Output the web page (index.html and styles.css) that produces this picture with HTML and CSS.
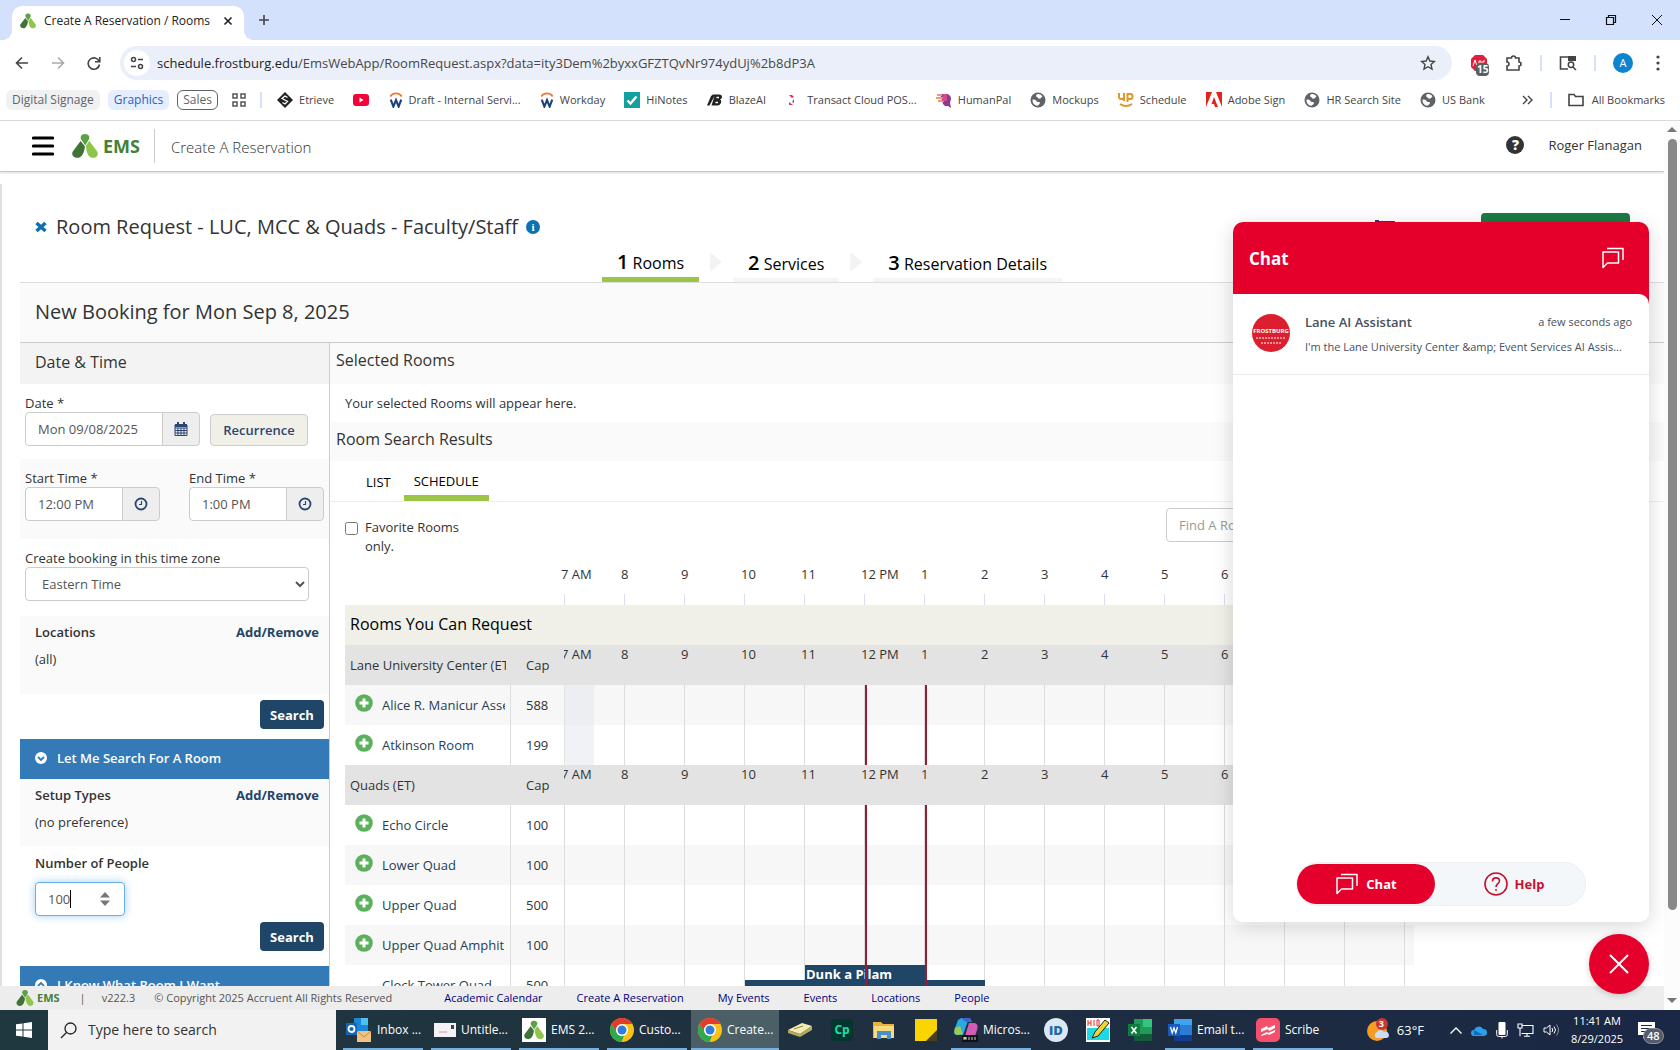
FILE: index.html
```
<!DOCTYPE html>
<html lang="en">
<head>
  <meta charset="UTF-8" />
  <meta name="viewport" content="width=device-width, initial-scale=1.0"/>
  <title>Create A Reservation / Rooms</title>
  <link rel="stylesheet" href="styles.css">
</head>
<body>
  <svg class="defs" width="0" height="0" aria-hidden="true">
    <symbol id="ems" viewBox="0 0 26 24">
      <path fill="#3f7436" d="M8.600 7 13 12.600C12.200 17 11.500 21 8 23.200 3.500 25.500-1.500 21.500.8 17.400z"/>
      <path fill="#5da145" d="M13 0c3.800 0 5.200 3 3.800 5.600L13.200 11.500 9.200 5.600C7.800 3 9.200 0 13 0z"/>
      <path fill="#8fc549" d="M17.200 6.800 25.200 17.400c2.300 4.100-2.200 8.100-6.700 5.800C15 21 14.600 16.500 13.800 12z"/>
    </symbol>
    <symbol id="chrome" viewBox="0 0 24 24">
      <circle cx="12" cy="12" r="12" fill="#fbc116"/>
      <path fill="#e33b2e" d="M1.600 6A12 12 0 0 1 22.400 6H12a6 6 0 0 0-5.200 9z"/>
      <path fill="#2da94f" d="M1.600 6 6.800 15A6 6 0 0 0 14 17.700L11.500 24A12 12 0 0 1 1.600 6z"/>
      <circle cx="12" cy="12" r="6" fill="#fff"/><circle cx="12" cy="12" r="4.500" fill="#2f7de1"/>
    </symbol>
    <symbol id="globe" viewBox="0 0 16 16">
      <circle cx="8" cy="8" r="7.500" fill="#5f6368"/>
      <path fill="#fff" d="M2.500 7.500c2 0 3.500.3 4 1.500.4 1 1.500 1 2.500 1s1.300 1.200.5 2-1 1.500-2.500 1.800A6 6 0 0 1 2.500 7.500zM7 2.200c2-.5 4 .3 5.300 1.800.3 1-.8 1.200-1.300 2s-1.500.8-2.500.6S8 5 7 5 5.500 3 7 2.200z"/>
    </symbol>
    <symbol id="workday" viewBox="0 0 16 18">
      <path d="M1.500 5a7 5.500 0 0 1 13 0" fill="none" stroke="#ee7b3a" stroke-width="2"/>
      <path d="M2 8.500l3 8 3-7.500 3 7.500 3-8" fill="none" stroke="#1d4277" stroke-width="2.400"/>
    </symbol>
    <symbol id="bubbles" viewBox="0 0 24 24">
      <path d="M2 6h15.500v11H6.500L2 21.500zM6 2.500h16V14" fill="none" stroke="#fff" stroke-width="1.500" stroke-linejoin="round"/>
    </symbol>
    <symbol id="clock" viewBox="0 0 14 14">
      <circle cx="7" cy="7" r="5.500" fill="none" stroke="#2b4670" stroke-width="1.800"/><path d="M7.500 4v3.500H5" fill="none" stroke="#2b4670" stroke-width="1.200"/>
    </symbol>
    <symbol id="plus" viewBox="0 0 18 18">
      <circle cx="9" cy="9" r="8.800" fill="#5db05d"/><path d="M9 4.500v9M4.500 9h9" stroke="#fff" stroke-width="3"/>
    </symbol>
  </svg>

  <div class="tabstrip">
    <div class="tab">
      <svg width="16" height="16"><use href="#ems"/></svg>
      <span>Create A Reservation / Rooms</span>
      <button class="icon-btn" aria-label="Close tab"><svg width="10" height="10" viewBox="0 0 10 10"><path d="M1.500 1.500l7 7M8.500 1.500l-7 7" stroke="#222" stroke-width="1.600"/></svg></button>
    </div>
    <button class="icon-btn new-tab" aria-label="New tab"><svg width="12" height="12" viewBox="0 0 12 12"><path d="M6 1v10M1 6h10" stroke="#444" stroke-width="1.600"/></svg></button>
    <div class="window-buttons">
      <button class="icon-btn" aria-label="Minimize"><svg width="12" height="12" viewBox="0 0 12 12"><path d="M1 5.500h10" stroke="#111"/></svg></button>
      <button class="icon-btn" aria-label="Restore"><svg width="12" height="12" viewBox="0 0 12 12"><path d="M1.500 3.500h7v7h-7zM3.500 3.500v-2h7v7h-2" fill="none" stroke="#111" stroke-width="1.200"/></svg></button>
      <button class="icon-btn" aria-label="Close"><svg width="12" height="12" viewBox="0 0 12 12"><path d="M1 1l10 10M11 1L1 11" stroke="#111"/></svg></button>
    </div>
  </div>

  <div class="toolbar">
    <button class="icon-btn" aria-label="Back"><svg width="14" height="14" viewBox="0 0 14 14"><path d="M13 7H2M7 1.500L1.500 7 7 12.500" fill="none" stroke="#444" stroke-width="1.600"/></svg></button>
    <button class="icon-btn" aria-label="Forward"><svg width="14" height="14" viewBox="0 0 14 14"><path d="M1 7h11M7 1.500L12.500 7 7 12.500" fill="none" stroke="#aaa" stroke-width="1.600"/></svg></button>
    <button class="icon-btn" aria-label="Reload"><svg width="14" height="14" viewBox="0 0 14 14"><path d="M12.200 5.500A5.700 5.700 0 1 0 12.500 8.500M12.800 1v4.800H8" fill="none" stroke="#444" stroke-width="1.600"/></svg></button>
    <div class="omnibox">
      <button class="site-info" aria-label="Site information"><svg width="14" height="14" viewBox="0 0 14 14" fill="none" stroke="#444" stroke-width="1.500"><circle cx="3.500" cy="3.500" r="2"/><path d="M8 3.500h5M1 10.500h5"/><circle cx="10.500" cy="10.500" r="2"/></svg></button>
      <p class="url"><b>schedule.frostburg.edu</b>/EmsWebApp/RoomRequest.aspx?data=ity3Dem%2byxxGFZTQvNr974ydUj%2b8dP3A</p>
      <button class="icon-btn" aria-label="Bookmark"><svg width="16" height="16" viewBox="0 0 16 16"><path d="M8 1.800l1.900 4.200 4.500.5-3.400 3 1 4.500L8 11.700 4 14l1-4.500-3.400-3L6.100 6z" fill="none" stroke="#444" stroke-width="1.400"/></svg></button>
    </div>
    <div class="extensions">
      <button class="icon-btn adblock" aria-label="Ad blocker"><svg width="18" height="18" viewBox="0 0 18 18"><path d="M5 1h8l4 4v8l-4 4H5l-4-4V5z" fill="#e01f3d"/><path d="M3 12l2-6 2 6M9 12V7h2v5M13 12V7h2" stroke="#fff" fill="none"/></svg><span class="ad-count">15</span></button>
      <button class="icon-btn" aria-label="Extensions"><svg width="18" height="18" viewBox="0 0 18 18"><path d="M2 4h4.500a2 2 0 0 1 4 0H14v4a2 2 0 0 1 0 4v4H2v-4a2 2 0 0 0 0-4z" fill="none" stroke="#444" stroke-width="1.600"/></svg></button>
      <i class="divider"></i>
      <button class="icon-btn" aria-label="Side panel search"><svg width="18" height="16" viewBox="0 0 18 16"><path d="M9 14H1.500V2H16v4" fill="none" stroke="#444" stroke-width="1.600"/><path d="M9 1h8v5H9z" fill="#444"/><circle cx="12" cy="9.800" r="2.700" fill="#fff" stroke="#444" stroke-width="1.500"/><path d="M14 12l3 3" stroke="#444" stroke-width="1.500"/></svg></button>
      <i class="divider"></i>
      <button class="profile">A</button>
      <button class="icon-btn" aria-label="Menu"><svg width="4" height="16" viewBox="0 0 4 16" fill="#444"><circle cx="2" cy="2" r="1.600"/><circle cx="2" cy="8" r="1.600"/><circle cx="2" cy="14" r="1.600"/></svg></button>
    </div>
  </div>

  <nav class="bookmarks">
    <a class="group grey" href="#">Digital Signage</a>
    <a class="group blue" href="#">Graphics</a>
    <a class="group outline" href="#">Sales</a>
    <svg class="apps" width="14" height="14" viewBox="0 0 14 14" fill="none" stroke="#555" stroke-width="1.500"><path d="M1 1h4v4H1zM9 1h4v4H9zM1 9h4v4H1zM9 9h4v4H9z"/></svg>
    <i class="divider"></i>
    <div class="links">
      <a href="#"><svg width="16" height="16" viewBox="0 0 16 16"><path d="M8 0l8 8-8 8-8-8z" fill="#222"/><path d="M10.500 5.500L8 4 5 6.500l5.500 3L8 12l-2.500-1.500" fill="none" stroke="#fff" stroke-width="1.300"/></svg>Etrieve</a>
      <a href="#" aria-label="YouTube"><svg width="16" height="12" viewBox="0 0 16 12"><rect width="16" height="12" rx="3" fill="#f4033a"/><path d="M6.500 3.500L10.500 6l-4 2.500z" fill="#fff"/></svg></a>
      <a href="#"><svg width="14" height="16"><use href="#workday"/></svg>Draft - Internal Servi...</a>
      <a href="#"><svg width="14" height="16"><use href="#workday"/></svg>Workday</a>
      <a href="#"><svg width="16" height="16" viewBox="0 0 16 16"><path d="M0 0h16v16H0z" fill="#15a0a0"/><path d="M3.500 8.500l3 3 6-7" fill="none" stroke="#fff" stroke-width="2.400"/></svg>HiNotes</a>
      <a href="#"><svg width="16" height="14" viewBox="0 0 16 14"><path d="M0 12.500L4 3l2-1.500h6.500c3 0 3.500 4 .5 5 2.500 1 1 6-2.500 6H4.500L7.500 3 2.500 12.500z" fill="#222"/><path d="M9.500 4.500h2.500M8.500 9.500h2.500" stroke="#fff" stroke-width="1.500"/></svg>BlazeAI</a>
      <a href="#"><svg width="16" height="12" viewBox="0 0 16 12"><path d="M4 1h3l2 2-2 1zM9 5v4l-2-1zM4 8l4 3H4z" fill="#d8345b"/></svg>Transact Cloud POS...</a>
      <a href="#"><svg width="16" height="16" viewBox="0 0 16 16"><path d="M4 2h6c3 0 5 2 5 5l-1 4 1 5-3-2H9L7 12z" fill="#8a3a92"/><path d="M0 6h8M2 9h6M1 3h5" stroke="#f19a7a" stroke-width="2"/><path d="M7 2h4v7H6z" fill="#d8498c"/></svg>HumanPal</a>
      <a href="#"><svg width="16" height="16"><use href="#globe"/></svg>Mockups</a>
      <a href="#"><svg width="16" height="16" viewBox="0 0 16 16" fill="none" stroke="#e0962d" stroke-width="2"><path d="M1 1v4q0 2 2.500 2T6 5V1M6 5v4M9.500 10V2h3q2 0 2 2.500T12.500 7h-3M2 12q6 4 12 0"/></svg>Schedule</a>
      <a href="#"><svg width="16" height="15" viewBox="0 0 16 15"><path d="M0 0h6L0 15zM10 0h6v15zM8 5l4 10H9l-1-3H5.500z" fill="#e1251b"/></svg>Adobe Sign</a>
      <a href="#"><svg width="16" height="16"><use href="#globe"/></svg>HR Search Site</a>
      <a href="#"><svg width="16" height="16"><use href="#globe"/></svg>US Bank</a>
    </div>
    <button class="icon-btn" aria-label="More bookmarks"><svg width="11" height="10" viewBox="0 0 11 10"><path d="M1 1l4 4-4 4M6 1l4 4-4 4" fill="none" stroke="#444" stroke-width="1.400"/></svg></button>
    <i class="divider"></i>
    <a class="all" href="#"><svg width="16" height="14" viewBox="0 0 16 14"><path d="M1 1.500h5l1.500 2H15v9H1z" fill="none" stroke="#444" stroke-width="1.600"/></svg>All Bookmarks</a>
  </nav>

  <div class="viewport">
    <div class="page">
      <header class="topbar">
        <button class="icon-btn menu" aria-label="Menu"><svg width="22" height="20" viewBox="0 0 22 20"><path d="M1.500 2h19M1.500 10h19M1.500 18h19" stroke="#000" stroke-width="3.200" stroke-linecap="round"/></svg></button>
        <a class="brand" href="#"><svg width="26" height="24"><use href="#ems"/></svg>EMS</a>
        <h1>Create A Reservation</h1>
        <a class="help" href="#" aria-label="Help">?</a>
        <a class="user" href="#">Roger Flanagan</a>
      </header>

      <main>
        <div class="title-row">
          <button class="icon-btn" aria-label="Cancel request"><svg width="12" height="12" viewBox="0 0 12 12"><path d="M1.500 2l9 8M10.500 2l-9 8" stroke="#0d70b0" stroke-width="3.400"/></svg></button>
          <h2>Room Request - LUC, MCC &amp; Quads - Faculty/Staff</h2>
          <span class="info">i</span>
          <svg class="cart" width="20" height="20" viewBox="0 0 20 20"><path d="M0 0h4v1h16l-2 9H6L3 2H0z" fill="#2b3a80"/></svg>
          <button class="next" aria-label="Next Step"></button>
        </div>
        <ol class="steps">
          <li class="active"><b>1</b> Rooms</li>
          <li class="arrow"></li>
          <li><b>2</b> Services</li>
          <li class="arrow"></li>
          <li><b>3</b> Reservation Details</li>
        </ol>
        <h2 class="booking">New Booking for Mon Sep 8, 2025</h2>

        <div class="columns">
          <aside>
            <h3>Date &amp; Time</h3>
            <div class="block date">
              <div class="field">
                <label for="date">Date *</label>
                <div class="input-group">
                  <input id="date" type="text" value="Mon 09/08/2025">
                  <button aria-label="Pick a date"><svg width="14" height="14" viewBox="0 0 14 14"><path d="M1 3h12v10.500H1zM1 6h12M1 8.500h12M1 11h12M4 6v7M7 6v7M10 6v7" fill="none" stroke="#2b4670"/><path d="M1 2h12v3H1zM3 0h2v3H3zM9 0h2v3H9z" fill="#2b4670"/></svg></button>
                </div>
              </div>
              <button class="recurrence">Recurrence</button>
            </div>
            <div class="block shaded times">
              <div class="field">
                <label for="start">Start Time *</label>
                <div class="input-group">
                  <input id="start" type="text" value="12:00 PM">
                  <button aria-label="Pick start time"><svg width="14" height="14"><use href="#clock"/></svg></button>
                </div>
              </div>
              <div class="field">
                <label for="end">End Time *</label>
                <div class="input-group">
                  <input id="end" type="text" value="1:00 PM">
                  <button aria-label="Pick end time"><svg width="14" height="14"><use href="#clock"/></svg></button>
                </div>
              </div>
            </div>
            <div class="block zone">
              <label for="zone">Create booking in this time zone</label>
              <select id="zone"><option>Eastern Time</option></select>
            </div>
            <div class="block shaded filter locations">
              <p class="filter-head"><b>Locations</b><a href="#">Add/Remove</a></p>
              <p>(all)</p>
            </div>
            <div class="search-row"><button class="search">Search</button></div>
            <button class="accordion"><svg width="12" height="12" viewBox="0 0 12 12"><circle cx="6" cy="6" r="6" fill="#fff"/><path d="M3 5l3 3 3-3" fill="none" stroke="#337ab7" stroke-width="1.800"/></svg>Let Me Search For A Room</button>
            <div class="block shaded filter setup">
              <p class="filter-head"><b>Setup Types</b><a href="#">Add/Remove</a></p>
              <p>(no preference)</p>
            </div>
            <div class="block people">
              <label for="people">Number of People</label>
              <div class="number">
                <input id="people" type="number" value="100">
                <i class="caret"></i>
                <svg width="10" height="14" viewBox="0 0 10 14" fill="#777"><path d="M0 5.500L5 0l5 5.500zM0 8.500h10L5 14z"/></svg>
              </div>
            </div>
            <div class="search-row last"><button class="search">Search</button></div>
            <button class="accordion"><svg width="12" height="12" viewBox="0 0 12 12"><circle cx="6" cy="6" r="6" fill="#fff"/><path d="M3 7l3-3 3 3" fill="none" stroke="#337ab7" stroke-width="1.800"/></svg>I Know What Room I Want</button>
          </aside>

          <section class="results">
            <h3>Selected Rooms</h3>
            <p class="empty">Your selected Rooms will appear here.</p>
            <h3 class="found">Room Search Results</h3>
            <nav class="view-tabs">
              <a href="#">LIST</a>
              <a class="active" href="#">SCHEDULE</a>
            </nav>
            <div class="options">
              <input id="fav" type="checkbox">
              <label for="fav">Favorite Rooms only.</label>
              <input class="find" type="text" placeholder="Find A Room" aria-label="Find A Room">
            </div>
            <div class="ruler hours"></div>
            <table class="schedule">
              <caption>Rooms You Can Request</caption>
              <colgroup><col class="c-room"><col class="c-cap"><col></colgroup>
              <tbody id="scheduleBody"></tbody>
            </table>
          </section>
        </div>
      </main>

      <footer>
        <a class="brand small" href="#"><svg width="18" height="16"><use href="#ems"/></svg>EMS</a>
        <span class="bar">|</span>
        <span class="version">v222.3</span>
        <span>© Copyright 2025 Accruent All Rights Reserved</span>
        <nav>
          <a href="#">Academic Calendar</a>
          <a href="#">Create A Reservation</a>
          <a href="#">My Events</a>
          <a href="#">Events</a>
          <a href="#">Locations</a>
          <a href="#">People</a>
        </nav>
      </footer>
    </div>
    <div class="scrollbar"><i class="up"></i><i class="thumb"></i><i class="down"></i></div>

    <div class="chat">
      <div class="chat-head"><h2>Chat</h2><svg width="24" height="24"><use href="#bubbles"/></svg></div>
      <div class="chat-body">
        <a class="thread" href="#">
          <svg class="avatar" width="38" height="38" viewBox="0 0 38 38"><circle cx="19" cy="19" r="19" fill="#dc1f2e"/><text x="19" y="19">FROSTBURG</text><path d="M4 24h30M9 29h20" stroke="#f5b5ba" stroke-width="1.500" stroke-dasharray="2 1"/></svg>
          <div class="thread-text">
            <p class="who"><b>Lane AI Assistant</b><time>a few seconds ago</time></p>
            <p class="msg">I'm the Lane University Center &amp;amp; Event Services AI Assis...</p>
          </div>
        </a>
        <div class="chat-tabs">
          <button class="on"><svg width="24" height="24"><use href="#bubbles"/></svg>Chat</button>
          <button><svg width="24" height="24" viewBox="0 0 24 24" fill="none" stroke="#c8102e" stroke-width="1.600"><circle cx="12" cy="12" r="11"/><path d="M8.500 9.500c0-5 7-4.500 7-.5 0 2.500-3.500 3-3.500 6M12 17v1.800"/></svg>Help</button>
        </div>
      </div>
    </div>
    <button class="chat-close" aria-label="Close chat"><svg width="20" height="20" viewBox="0 0 20 20"><path d="M1 1l18 18M19 1L1 19" stroke="#fff" stroke-width="2"/></svg></button>
  </div>

  <div class="taskbar">
    <button class="start" aria-label="Start"><svg width="16" height="16" viewBox="0 0 16 16" fill="#fff"><path d="M0 2.300l6.500-.9v6.100H0zM7.500 1.200L16 0v7.500H7.500zM0 8.500h6.500v6.100L0 13.700zM7.500 8.500H16V16l-8.500-1.200z"/></svg></button>
    <label class="task-search"><svg width="17" height="17" viewBox="0 0 17 17"><circle cx="10.500" cy="6.500" r="5.500" fill="none" stroke="#222" stroke-width="1.300"/><path d="M6.500 10.500L1 16" stroke="#222" stroke-width="1.300"/></svg><input type="text" placeholder="Type here to search"></label>
    <button class="task"><svg width="26" height="24" viewBox="0 0 26 24"><path d="M8 0h14v14H8z" fill="#1c86d8"/><path d="M15 0h7v7h-7z" fill="#4cc2f0"/><path d="M0 5h11v12H0z" fill="#1367b5"/><circle cx="5.500" cy="11" r="3" fill="none" stroke="#fff" stroke-width="1.800"/><path d="M11 13h14v11H11z" fill="#f0c283"/><path d="M11 13l7 6 7-6" fill="none" stroke="#c58a40"/></svg>Inbox ...</button>
    <button class="task"><svg width="22" height="14" viewBox="0 0 22 14"><path d="M0 0h22v14H0z" fill="#f4f2f4"/><path d="M5 9h8" stroke="#d29a9a"/><path d="M17 2h3v4h-3z" fill="#345"/></svg>Untitle...</button>
    <button class="task"><span class="white"><svg width="20" height="20"><use href="#ems"/></svg></span>EMS 2...</button>
    <button class="task"><svg width="24" height="24"><use href="#chrome"/></svg>Custo...</button>
    <button class="task current"><svg width="24" height="24"><use href="#chrome"/></svg>Create...</button>
    <button class="pin" aria-label="Scanner"><svg width="24" height="16" viewBox="0 0 24 16"><path d="M0 8L14 1l10 3-12 8z" fill="#f3edb5"/><path d="M0 8l12 4v3L0 11zM12 12l12-8v4l-12 7z" fill="#b5aa62"/><path d="M6 7l9-3" stroke="#8d8344"/></svg></button>
    <button class="pin" aria-label="Captivate"><span class="cp">Cp</span></button>
    <button class="pin" aria-label="File Explorer"><svg width="22" height="20" viewBox="0 0 22 20"><path d="M0 2h8l2 2h11v14H0z" fill="#e8b33c"/><path d="M1 6h20v12H1z" fill="#fbda7c"/><path d="M4 19v-8h14v8h-4v-4H8v4z" fill="#4590cf"/></svg></button>
    <button class="pin" aria-label="Sticky Notes"><svg width="22" height="22" viewBox="0 0 22 22"><path d="M0 0h22v22H0z" fill="#fbd503"/><path d="M22 11L11 22h11z" fill="#4a4020"/></svg></button>
    <button class="task"><svg width="24" height="24" viewBox="0 0 24 24"><path d="M7 0h8l-6 17H3c-4 0-3-4-2-7L4 2z" fill="#2aa9e0"/><path d="M1 10l5-2 3 8-6 1c-3-1-3-4-2-7z" fill="#9acb4c"/><path d="M7 0h8q2 0 3 4h-6z" fill="#3a66d8"/><path d="M15 5h5c4 0 4 4 3 7l-2 6H11z" fill="#d35bb6"/><path d="M8 17h16v7H8z" fill="#111"/><path d="M10 22v-3l1 2 1-2v3M15 19v3M18 19v3M21 19v3" stroke="#fff" stroke-width=".8" fill="none"/></svg>Micros...</button>
    <button class="pin" aria-label="iD"><span class="id">iD</span></button>
    <button class="pin" aria-label="HID"><svg width="24" height="24" viewBox="0 0 24 24"><path d="M0 0h24v24H0z" fill="#fff"/><path d="M1 10h22v12H1z" fill="#1ed9e4"/><path d="M2 2v6M5 2v6M2 5h3M8 2v6M11 2v6h2V2z" stroke="#e03030" fill="none"/><path d="M6 20L9 14 19 2l4 3-11 13z" fill="#ecd92c" stroke="#222"/></svg></button>
    <button class="pin" aria-label="Excel"><svg width="24" height="22" viewBox="0 0 24 22"><path d="M6 0h18v22H6z" fill="#1f9d58"/><path d="M15 0h9v8h-9z" fill="#34c481"/><path d="M6 15h18v7H6z" fill="#145c37"/><path d="M0 5h12v12H0z" fill="#107c41"/><path d="M3.500 8l5 6.500M8.500 8l-5 6.500" stroke="#fff" stroke-width="1.600"/></svg></button>
    <button class="task"><svg width="24" height="22" viewBox="0 0 24 22"><path d="M6 0h18v22H6z" fill="#2b7cd3"/><path d="M6 0h18v6H6z" fill="#41a5ee"/><path d="M6 16h18v6H6z" fill="#103f91"/><path d="M0 5h12v12H0z" fill="#185abd"/><path d="M2.500 8l1.700 6L6 9l1.800 5 1.700-6" fill="none" stroke="#fff" stroke-width="1.300"/></svg>Email t...</button>
    <button class="task"><svg width="24" height="24" viewBox="0 0 24 24"><rect width="24" height="24" rx="5" fill="#f4506b"/><path d="M5 11l6-3 1 2 7-3v3l-6 3-1-2-7 3zM5 17l6-3 1 1 7-3v2l-6 3-1-1-7 2z" fill="#fff"/></svg>Scribe</button>

    <div class="tray">
      <span class="weather"><svg width="24" height="24" viewBox="0 0 24 24"><circle cx="11" cy="13" r="10" fill="#f59a23"/><path d="M10 20a3.500 3.500 0 0 1 1-6 4 4 0 0 1 7 0 3 3 0 0 1 3 6z" fill="#c9dcf8"/><circle cx="16" cy="6" r="6" fill="#c8372d"/></svg><i>3</i>63°F</span>
      <svg width="12" height="7" viewBox="0 0 12 7"><path d="M.5 6.500L6 1l5.500 5.500" fill="none" stroke="#fff" stroke-width="1.300"/></svg>
      <svg width="16" height="11" viewBox="0 0 16 11"><path d="M3 11a3 3 0 0 1 0-6 5 5 0 0 1 9-1 3.500 3.500 0 0 1 1 7z" fill="#28a0ea"/><path d="M3 5l9 5H3z" fill="#0f6cbd"/></svg>
      <svg width="12" height="17" viewBox="0 0 12 17"><rect x="2.500" width="7" height="13" rx="1" fill="#fff"/><path d="M.7 8v4.500q0 2 2 2h6.600q2 0 2-2V8M6 14v2.500" fill="none" stroke="#fff"/></svg>
      <svg width="17" height="14" viewBox="0 0 17 14"><path d="M5 2.500h11v8H4.500M7 13.300h6M10 10.500v3M1 1h4v4H1zM3 5v8.300" fill="none" stroke="#fff" stroke-width="1.100"/></svg>
      <svg width="17" height="14" viewBox="0 0 17 14" fill="none" stroke="#fff"><path d="M1 5h2.500L7 2v10L3.500 9H1z"/><path d="M9 5q1.500 2 0 4M11 3.500q3 3.500 0 7"/><path d="M13.500 1.500q4 5.500 0 11" stroke="#8a93a5"/></svg>
      <p class="time">11:41 AM<br>8/29/2025</p>
      <button class="icon-btn notes" aria-label="Notifications"><svg width="17" height="17" viewBox="0 0 17 17"><path d="M0 0h17v13h-9l-3 4v-4H0z" fill="#fff"/><path d="M3 3.500h11M3 6.500h11M3 9.500h8" stroke="#1b2744"/></svg><span>48</span></button>
    </div>
  </div>

  <script>
    const HOUR = 60;
    const FIRST = 7;
    const labels = ["7 AM", "8", "9", "10", "11", "12 PM", "1", "2", "3", "4", "5", "6", "7", "8"];

    const buildings = [
      { name: "Lane University Center (ET)", opens: 7.5, rooms: [
        { name: "Alice R. Manicur Assembly", cap: 588, alt: true },
        { name: "Atkinson Room", cap: 199 },
      ]},
      { name: "Quads (ET)", opens: 7, rooms: [
        { name: "Echo Circle", cap: 100 },
        { name: "Lower Quad", cap: 100, alt: true },
        { name: "Upper Quad", cap: 500 },
        { name: "Upper Quad Amphit", cap: 100, alt: true },
        { name: "Clock Tower Quad", cap: 500, full: true, events: [
          { from: 10, to: 14, lane: "low", title: "" },
          { from: 11, to: 13, lane: "top", title: "Dunk a Pilam" },
        ]},
      ]},
    ];

    const hours = labels.map(l => `<span>${l}</span>`).join("");
    document.querySelector(".ruler").innerHTML = hours;

    const x = h => (h - FIRST) * HOUR;
    let html = "";
    buildings.forEach(b => {
      html += `<tr class="building"><th><div class="clip">${b.name}</div></th><th class="cap">Cap</th><td><div class="hours">${hours}</div></td></tr>`;
      b.rooms.forEach(r => {
        let line = b.opens > FIRST ? `<i class="closed" style="width:${x(b.opens)}px"></i>` : "";
        (r.events || []).forEach(e => {
          line += `<div class="event ${e.lane}" style="left:${x(e.from) + 1}px;width:${x(e.to) - x(e.from)}px">${e.title}</div>`;
        });
        line += [12, 13].map(h => `<i class="mark" style="left:${x(h) + 1}px"></i>`).join("");
        const icon = r.full ? "" : `<svg width="18" height="18"><use href="#plus"/></svg>`;
        html += `<tr class="${r.alt ? "alt" : ""}"><td class="room"><div class="clip"><span class="add">${icon}</span><a href="#">${r.name}</a></div></td><td class="cap">${r.cap}</td><td class="line"><div class="track">${line}</div></td></tr>`;
      });
    });
    document.getElementById("scheduleBody").innerHTML = html;
  </script>
</body>
</html>
```
FILE: styles.css
```
* { box-sizing: border-box; }
body { margin: 0; height: 100vh; display: flex; flex-direction: column; overflow: hidden; background: #fff; color: #333; font: 13px/18px "Open Sans", "Noto Sans", sans-serif; }
h1, h2, h3, p, ol { margin: 0; padding: 0; font-weight: 400; }
a { text-decoration: none; color: inherit; }
button, input, select { font: inherit; color: inherit; }
button { border: none; padding: 0; cursor: pointer; }
svg { flex: none; display: block; }
.defs { position: absolute; }
.icon-btn { background: none; display: flex; align-items: center; justify-content: center; flex: none; }
.divider { width: 2px; height: 16px; background: #d3e1fb; }

/* browser chrome */
.tabstrip { flex: none; height: 40px; background: #d3e1fd; display: flex; align-items: center; padding-left: 12px; }
.tab { align-self: flex-end; width: 232px; height: 34px; background: #fff; border-radius: 10px 10px 0 0; display: flex; align-items: center; padding: 0 11px 4px 8px; gap: 8px; font-size: 12px; color: #222; position: relative; }
.tab::before, .tab::after { content: ""; position: absolute; bottom: 0; width: 10px; height: 10px; }
.tab::before { left: -10px; background: radial-gradient(circle at 0 0, transparent 10px, #fff 10px); }
.tab::after { right: -10px; background: radial-gradient(circle at 100% 0, transparent 10px, #fff 10px); }
.tab span { flex: 1; white-space: nowrap; }
.new-tab { margin-left: 14px; }
.window-buttons { margin-left: auto; display: flex; }
.window-buttons button { width: 46px; height: 40px; }

.toolbar { flex: none; height: 46px; display: flex; align-items: center; padding: 0 20px 0 15px; gap: 22px; }
.omnibox { flex: 1; height: 34px; margin-left: -3px; border-radius: 17px; background: #ebeff9; display: flex; align-items: center; padding: 0 16px 0 4px; }
.site-info { width: 26px; height: 26px; border-radius: 50%; background: #fff; display: flex; align-items: center; justify-content: center; }
.url { flex: 1; margin-left: 7px; font-size: 13px; color: #474747; }
.url b { font-weight: 400; color: #1f1f1f; }
.extensions { display: flex; align-items: center; gap: 17px; margin-left: -4px; }
.adblock { position: relative; }
.ad-count { position: absolute; left: 6px; top: 9px; background: #5a5f62; color: #fff; border-radius: 4px; font-size: 10px; line-height: 13px; font-weight: 700; padding: 0 1px; }
.profile { width: 20px; height: 20px; margin-right: 6px; border-radius: 50%; background: #0c84d0; color: #fff; font-size: 11px; line-height: 20px; }

.bookmarks { flex: none; height: 35px; border-bottom: 1px solid #dadce0; display: flex; align-items: center; padding: 0 15px 7px 6px; font-size: 11px; color: #444; white-space: nowrap; }
.group { height: 20px; line-height: 18px; border-radius: 6px; border: 1px solid transparent; padding: 0 5px; margin-right: 8px; font-size: 12px; }
.grey { background: #f0f1f3; color: #5f6368; }
.blue { background: #e4eefe; color: #2c62c4; }
.outline { border-color: #5f6368; color: #5f6368; }
.apps { margin: 0 14px 0 6px; }
.links { flex: 1; display: flex; justify-content: space-between; margin: 0 37px 0 15px; }
.links a, .all { display: flex; align-items: center; gap: 6px; }
.bookmarks .icon-btn { margin-right: 17px; }
.all { margin-left: 16px; gap: 8px; }

/* page */
.viewport { flex: 1; min-height: 0; display: flex; position: relative; }
.page { flex: 1; min-width: 0; display: flex; flex-direction: column; }
.scrollbar { flex: none; width: 16px; background: #fcfcfc; display: flex; flex-direction: column; align-items: center; padding: 6px 0 7px; }
.up, .down { border: 5px solid transparent; }
.up { border-top: 0; border-bottom-color: #777; }
.down { border-bottom: 0; border-top-color: #777; margin-top: auto; }
.thumb { width: 9px; height: 88%; margin-top: 7px; border-radius: 5px; background: #888; }

.topbar { flex: none; height: 51px; border-bottom: 1px solid #c8c8c8; box-shadow: 0 1px 2px rgba(0,0,0,.15); display: flex; align-items: center; padding: 0 22px 0 32px; }
.brand { display: flex; align-items: center; gap: 5px; margin-left: 18px; font-weight: 700; font-size: 18px; color: #44803a; }
.topbar h1 { margin-left: 14px; padding-left: 16px; border-left: 1px solid #ccc; font-size: 15px; line-height: 32px; font-weight: 300; padding-top: 2px; }
.help { margin-left: auto; width: 18px; height: 18px; border-radius: 50%; background: #333; color: #fff; font-weight: 800; font-size: 14px; line-height: 18px; text-align: center; }
.help, .user { margin-bottom: 3px; }
.user { margin-left: 24px; }

main { flex: 1; min-height: 0; overflow: hidden; margin-top: 12px; padding-left: 18px; border-left: 2px solid #e0e0e0; }
.title-row { display: flex; align-items: center; height: 64px; padding: 22px 34px 0 15px; }
h2 { font-size: 20px; line-height: 28px; }
.title-row h2 { margin: 0 8px 0 9px; }
.info { width: 14px; height: 14px; border-radius: 50%; background: #0d70b0; color: #fff; font: 700 11px/14px "Liberation Serif", serif; text-align: center; }
.cart { margin-left: auto; margin-top: 6px; }
.next { align-self: flex-start; margin: 7px 0 0 86px; width: 149px; height: 34px; background: #1d7a43; border-radius: 4px; }
.steps { list-style: none; display: flex; justify-content: center; align-items: flex-end; height: 34px; margin-left: -20px; color: #000; font-size: 16px; }
.steps li { padding: 0 15px; line-height: 28px; border-bottom: 4px solid #f5f5f5; }
.steps b { font-size: 20px; font-weight: 600; }
.steps .active { border-bottom: 5px solid #9cc546; }
.steps .arrow { width: 12px; height: 20px; padding: 0; border: 0; margin: 0 11px 10px; background: #f3f3f3; clip-path: polygon(0 0, 100% 50%, 0 100%); }
.booking { border-top: 1px solid #ddd; border-bottom: 1px solid #ccc; background: #fafafa; padding: 15px 15px 16px; }

.columns { display: flex; }
h3 { font-size: 16px; line-height: 36px; height: 41px; }
aside { flex: none; width: 310px; border-right: 1px solid #ccc; }
aside h3 { background: #f3f3f3; padding: 1px 15px 0; }
.shaded { background: #fafafa; }
.block label { display: block; }
.block { padding: 0 5px; }
.date { display: flex; align-items: flex-end; gap: 10px; height: 75px; padding-bottom: 13px; }
.input-group { display: flex; height: 34px; }
.input-group input { width: 98px; padding: 0 12px; border: 1px solid #ccc; border-radius: 4px 0 0 4px; color: #555; }
.input-group button { width: 38px; margin-left: -1px; background: #eee; border: 1px solid #ccc; border-radius: 0 4px 4px 0; display: flex; align-items: center; justify-content: center; }
.input-group #date { width: 138px; }
.recurrence { width: 98px; height: 32px; border: 1px solid #ccc; border-radius: 4px; background: #f1f0e8; color: #2b4670; font-weight: 600; }
.times { display: flex; gap: 29px; height: 80px; padding-top: 10px; }
.zone { height: 77px; padding-top: 10px; }
select { width: 284px; height: 34px; border: 1px solid #ccc; border-radius: 4px; background: #fff; color: #555; padding: 0 12px; }
.filter, .people { padding: 7px 10px 0 15px; }
.filter-head { display: flex; justify-content: space-between; margin-bottom: 9px; }
.filter b, .people label { font-weight: 600; }
.filter a { font-weight: 700; color: #1f4567; }
.locations { height: 78px; }
.setup { height: 67px; }
.people { height: 70px; padding-top: 8px; }
.search-row { display: flex; justify-content: flex-end; padding: 6px 5px 10px; }
.search-row.last { padding-bottom: 15px; }
.search { width: 64px; height: 29px; border-radius: 4px; background: #1f4567; color: #fff; font-weight: 700; }
.accordion { width: 100%; height: 40px; background: #337ab7; color: #fff; font-weight: 600; display: flex; align-items: center; gap: 10px; padding: 0 15px 2px; }
.number { position: relative; width: 90px; margin-top: 10px; }
.number input { width: 90px; height: 34px; border: 1px solid #66afe9; border-radius: 4px; padding: 0 12px; color: #555; box-shadow: 0 0 8px rgba(102,175,233,.6); appearance: textfield; }
.number input::-webkit-inner-spin-button { display: none; }
.number svg { position: absolute; right: 15px; top: 10px; }
.caret { position: absolute; left: 35px; top: 8px; width: 1px; height: 18px; background: #000; }

.results { flex: 1; min-width: 0; }
.results h3 { background: #fafafa; padding-left: 6px; line-height: 34px; }
.results .found { height: 39px; }
.empty { padding: 10px 15px; }
.view-tabs { display: flex; align-items: flex-end; gap: 3px; height: 41px; border-bottom: 1px solid #eee; padding-left: 26px; color: #000; }
.view-tabs a { padding: 0 10px 10px; }
.view-tabs .active { border-bottom: 6px solid #9cc546; padding-bottom: 5px; }
.options { display: flex; align-items: flex-start; height: 55px; padding: 6px 0 0 15px; }
.options input[type=checkbox] { width: 13px; height: 13px; margin: 14px 7px 0 0; }
.options label { width: 110px; line-height: 19px; padding-top: 10px; }
.find { margin-left: 691px; width: 180px; height: 34px; border: 1px solid #ccc; border-radius: 4px; padding: 0 12px; }
.find::placeholder { color: #999; }

.hours { display: flex; }
.hours span { flex: none; width: 60px; white-space: nowrap; text-indent: -3px; }
.ruler { height: 48px; margin-left: 234px; padding-top: 8px; }
.ruler span { background: linear-gradient(#dde, #dde) left bottom / 1px 11px no-repeat; }
.schedule { width: 1069px; margin-left: 15px; table-layout: fixed; border-spacing: 0; }
.schedule caption { background: #f0f0e8; color: #000; font-size: 16px; line-height: 38px; height: 40px; padding-left: 5px; text-align: left; }
.c-room { width: 166px; }
.c-cap { width: 53px; }
.schedule td, .schedule th { height: 40px; padding: 0; font-weight: 400; text-align: left; }
.clip { overflow: hidden; white-space: nowrap; margin: 0 5px; line-height: 20px; }
.building { background: #e3e3e3; }
.building .hours { overflow: hidden; height: 40px; }
.alt { background: #f7f7f7; }
.schedule .room { border-right: 1px solid #ddd; }
.room .clip { display: flex; align-items: center; }
.room a { color: #1f3f57; }
.add { width: 32px; height: 22px; padding-left: 5px; flex: none; }
.schedule .cap { padding-left: 15px; }
.track { position: relative; height: 40px; background: repeating-linear-gradient(to right, #ddd 0 1px, transparent 1px 60px); }
.mark { position: absolute; top: 0; width: 2px; height: 40px; background: #9b1c31; }
.closed { position: absolute; top: 0; left: 0; height: 40px; background: rgba(228,230,236,.5); }
.event { position: absolute; background: #1f4567; color: #fff; font-weight: 700; padding-left: 1px; }
.event.top { top: 0; height: 18px; }
.event.low { top: 15px; height: 18px; }

footer { flex: none; height: 24px; background: #ededed; display: flex; align-items: center; padding-left: 16px; font-size: 11px; color: #555; }
.brand.small { margin-left: 0; gap: 3px; font-size: 11px; }
.bar { margin: 0 16px 0 20px; }
.version { margin-right: 19px; }
footer nav { display: flex; gap: 34px; margin-left: 52px; color: #00007d; }

/* chat widget floats over the page */
.chat { position: absolute; right: 31px; bottom: 88px; width: 416px; height: 700px; border-radius: 10px; overflow: hidden; background: linear-gradient(#e4002b 90px, #fff 90px); box-shadow: 0 4px 20px rgba(0,0,0,.16); display: flex; flex-direction: column; color: #45505e; }
.chat-head { height: 72px; display: flex; align-items: center; justify-content: space-between; padding: 0 24px 0 16px; color: #fff; }
.chat-head h2 { font-size: 17px; font-weight: 700; padding-top: 2px; }
.chat-body { flex: 1; background: #fff; border-top-right-radius: 10px; display: flex; flex-direction: column; }
.thread { display: flex; align-items: center; gap: 15px; height: 81px; padding: 0 17px 2px 19px; border-bottom: 1px solid #eaeaea; }
.avatar text { font: 700 6px "Open Sans", sans-serif; fill: #fff; text-anchor: middle; }
.thread-text { flex: 1; padding-top: 2px; }
.who { display: flex; justify-content: space-between; margin-bottom: 7px; }
.who b { font-weight: 600; }
.who time, .msg { font-size: 11px; white-space: nowrap; }
.chat-tabs { margin: auto auto 16px; width: 290px; height: 44px; border-radius: 22px; border: 1px solid #eaeff3; background: #f3f7fa; display: flex; align-items: center; }
.chat-tabs button { flex: 1; height: 40px; border-radius: 20px; background: none; display: flex; align-items: center; justify-content: center; gap: 7px; padding-left: 8px; font-weight: 700; color: #c8102e; }
.chat-tabs .on { flex: none; width: 138px; padding: 0; background: #e4002b; color: #fff; }
.chat-close { position: absolute; right: 31px; bottom: 16px; width: 60px; height: 60px; border-radius: 50%; background: #e4002b; box-shadow: 0 1px 6px rgba(0,0,0,.2); display: flex; align-items: center; justify-content: center; }

/* windows taskbar */
.taskbar { flex: none; height: 40px; background: linear-gradient(to right, #1f383f, #1f2f40 55%, #1a2745); display: flex; color: #fff; font-size: 12px; white-space: nowrap; }
.start { width: 48px; background: none; display: flex; align-items: center; justify-content: center; }
.task-search { width: 288px; margin-right: 3px; background: #f2f2f2; color: #333; display: flex; align-items: center; gap: 11px; padding-left: 12px; }
.task-search input { border: 0; background: none; flex: 1; min-width: 0; font-size: 14px; padding: 0; }
.task-search input::placeholder { color: #333; }
.task { width: 88px; background: linear-gradient(#76b0e0, #76b0e0) center bottom / 80px 2px no-repeat; display: flex; align-items: center; gap: 5px; padding-left: 7px; }
.task.current { background-color: #4c5f66; background-size: 88px 2px; }
.white { background: #fff; width: 24px; height: 24px; padding: 2px; }
.pin { width: 42px; background: none; display: flex; align-items: center; justify-content: center; }
.cp { width: 22px; height: 22px; border-radius: 4px; background: #04352f; color: #1ddfa8; font-weight: 700; line-height: 21px; }
.id { width: 24px; height: 24px; border-radius: 50%; background: #dbe7f2; color: #2068a8; font-weight: 800; font-size: 13px; line-height: 24px; }
.tray { margin-left: auto; display: flex; align-items: center; gap: 9px; padding-right: 17px; }
.weather { position: relative; display: flex; align-items: center; gap: 7px; margin-right: 17px; font-size: 13px; }
.weather i { position: absolute; left: 13px; top: -3px; font: 700 9px/18px "Open Sans", sans-serif; }
.time { width: 56px; text-align: center; line-height: 18px; font-size: 11px; }
.notes { position: relative; margin: 0 8px 0 4px; }
.notes span { position: absolute; left: 5px; top: 6px; background: #555c69; border: 1px solid #8a909a; border-radius: 8px; color: #fff; font-size: 11px; font-weight: 600; line-height: 14px; padding: 0 3px; }
```
